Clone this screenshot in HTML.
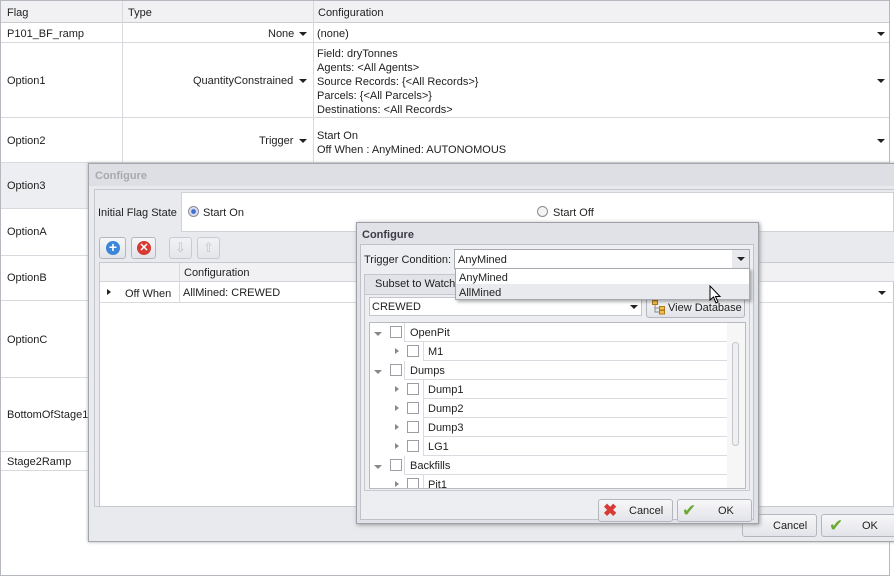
<!DOCTYPE html>
<html><head><style>
*{box-sizing:border-box;margin:0;padding:0}
body{width:894px;height:579px;background:#fff;font-family:"Liberation Sans",Arial,sans-serif;font-size:11px;color:#1e1e1e;position:relative;overflow:hidden}
.a{position:absolute}
.hl{position:absolute;background:#d8d9de}
.t{position:absolute;white-space:nowrap;margin-top:1px}
.arr{position:absolute;width:0;height:0;border-left:4px solid transparent;border-right:4px solid transparent;border-top:4px solid #222}
.btn{position:absolute;border:1px solid #b4b6be;border-radius:3px;background:linear-gradient(#f7f7f9,#e3e4e9)}
.cb{position:absolute;width:12px;height:12px;border:1px solid #9c9ea6;background:#fff}
.tri{position:absolute;width:0;height:0;border-top:3px solid transparent;border-bottom:3px solid transparent;border-left:4px solid #888}
.trd{position:absolute;width:0;height:0;border-left:4px solid transparent;border-right:4px solid transparent;border-top:4px solid #888}
.row{position:absolute;height:19px;border-bottom:1px solid #dadbe0;border-left:1px solid #dadbe0}
</style></head><body>
<div class="a" style="left:0;top:0;width:890px;height:576px;border:1px solid #b6b8c0"></div>
<div class="a" style="top:1px;left:1px;width:888px;height:22px;background:#f1f1f4;border-bottom:1px solid #ccc"></div>
<div class="a" style="left:1px;top:162px;width:121px;height:46px;background:#eceef1"></div>
<div class="hl" style="left:122px;top:1px;width:1px;height:161px"></div>
<div class="hl" style="left:313px;top:1px;width:1px;height:161px"></div>
<div class="hl" style="left:1px;top:42px;width:888px;height:1px"></div>
<div class="hl" style="left:1px;top:117px;width:888px;height:1px"></div>
<div class="hl" style="left:1px;top:162px;width:888px;height:1px"></div>
<div class="hl" style="left:1px;top:208px;width:88px;height:1px"></div>
<div class="hl" style="left:1px;top:255px;width:88px;height:1px"></div>
<div class="hl" style="left:1px;top:300px;width:88px;height:1px"></div>
<div class="hl" style="left:1px;top:377px;width:88px;height:1px"></div>
<div class="hl" style="left:1px;top:451px;width:88px;height:1px"></div>
<div class="hl" style="left:1px;top:470px;width:88px;height:1px"></div>
<div class="t" style="left:7px;top:6px">Flag</div>
<div class="t" style="left:128px;top:6px">Type</div>
<div class="t" style="left:318px;top:6px">Configuration</div>
<div class="t" style="left:7px;top:27px">P101_BF_ramp</div>
<div class="t" style="left:268px;top:27px">None</div><div class="arr" style="left:299px;top:32px"></div>
<div class="t" style="left:317px;top:27px">(none)</div><div class="arr" style="left:877px;top:32px"></div>
<div class="t" style="left:7px;top:74px">Option1</div>
<div class="t" style="left:193px;top:74px">QuantityConstrained</div><div class="arr" style="left:299px;top:79px"></div>
<div class="t" style="left:317px;top:46px;line-height:14px">Field: dryTonnes<br>Agents: &lt;All Agents&gt;<br>Source Records: {&lt;All Records&gt;}<br>Parcels: {&lt;All Parcels&gt;}<br>Destinations: &lt;All Records&gt;</div>
<div class="arr" style="left:877px;top:79px"></div>
<div class="t" style="left:7px;top:134px">Option2</div>
<div class="t" style="left:259px;top:134px">Trigger</div><div class="arr" style="left:299px;top:139px"></div>
<div class="t" style="left:317px;top:128px;line-height:14px">Start On<br>Off When : AnyMined: AUTONOMOUS</div>
<div class="arr" style="left:877px;top:139px"></div>
<div class="t" style="left:7px;top:179px">Option3</div>
<div class="t" style="left:7px;top:225px">OptionA</div>
<div class="t" style="left:7px;top:271px">OptionB</div>
<div class="t" style="left:7px;top:333px">OptionC</div>
<div class="t" style="left:7px;top:408px">BottomOfStage1</div>
<div class="t" style="left:7px;top:455px">Stage2Ramp</div>

<div class="a" style="left:88px;top:163px;width:810px;height:379px;background:#e9eaee;border:1px solid #a4a6ae;box-shadow:0 0 3px #aaa"></div>
<div class="a" style="left:89px;top:164px;width:808px;height:22px;background:#dedfe4"></div>
<div class="t" style="left:95px;top:169px;font-weight:bold;color:#a8a9ae">Configure</div>
<div class="a" style="left:94px;top:189px;width:804px;height:318px;border:1px solid #c8c9ce;background:#e9eaee"></div>
<div class="t" style="left:98px;top:206px">Initial Flag State</div>
<div class="a" style="left:181px;top:192px;width:713px;height:40px;background:#fff;border:1px solid #d0d1d6"></div>
<div class="a" style="left:188px;top:206px;width:11px;height:11px;border-radius:50%;border:1px solid #8a8c94;background:radial-gradient(#3d6fd6 30%,#dde 45%)"></div>
<div class="t" style="left:203px;top:206px">Start On</div>
<div class="a" style="left:537px;top:206px;width:11px;height:11px;border-radius:50%;border:1px solid #8a8c94;background:#f4f4f4"></div>
<div class="t" style="left:553px;top:206px">Start Off</div>
<div class="btn" style="left:99px;top:237px;width:27px;height:22px"><div class="a" style="left:6px;top:3px;width:14px;height:14px;border-radius:50%;background:#3b86d8;color:#fff;font-weight:bold;font-size:14px;line-height:13px;text-align:center">+</div></div>
<div class="btn" style="left:131px;top:237px;width:25px;height:22px"><div class="a" style="left:5px;top:3px;width:14px;height:14px;border-radius:50%;background:#d63a32;color:#fff;font-weight:bold;font-size:11px;line-height:14px;text-align:center">✕</div></div>
<div class="btn" style="left:169px;top:237px;width:23px;height:22px;opacity:.6;color:#aaa;text-align:center;line-height:20px;font-size:13px">⇩</div>
<div class="btn" style="left:197px;top:237px;width:23px;height:22px;opacity:.6;color:#aaa;text-align:center;line-height:20px;font-size:13px">⇧</div>
<div class="a" style="left:99px;top:262px;width:795px;height:245px;background:#fff;border:1px solid #c8c9ce"></div>
<div class="a" style="left:100px;top:263px;width:794px;height:19px;background:#f1f1f4;border-bottom:1px solid #d4d5da"></div>
<div class="hl" style="left:179px;top:263px;width:1px;height:39px"></div>
<div class="hl" style="left:100px;top:302px;width:794px;height:1px"></div>
<div class="t" style="left:184px;top:266px">Configuration</div>
<div class="a" style="left:107px;top:289px;border-top:3px solid transparent;border-bottom:3px solid transparent;border-left:4px solid #222"></div>
<div class="t" style="left:125px;top:287px">Off When</div>
<div class="t" style="left:183px;top:286px">AllMined: CREWED</div>
<div class="arr" style="left:878px;top:291px"></div>
<div class="btn" style="left:742px;top:514px;width:75px;height:23px"><span class="t" style="left:30px;top:4px">Cancel</span></div>
<div class="btn" style="left:821px;top:514px;width:75px;height:23px"><span class="t" style="left:7px;top:0;color:#6aa832;font-size:17px">✔</span><span class="t" style="left:40px;top:4px">OK</span></div>

<div class="a" style="left:356px;top:222px;width:403px;height:302px;background:#e1e2e7;border:1px solid #9fa1a9;box-shadow:1px 1px 4px #999"></div>
<div class="t" style="left:362px;top:228px;font-weight:bold;color:#3c3c44">Configure</div>
<div class="a" style="left:360px;top:244px;width:394px;height:276px;background:#eceef1;border:1px solid #c0c2c8"></div>
<div class="t" style="left:364px;top:253px">Trigger Condition:</div>
<div class="a" style="left:454px;top:249px;width:296px;height:20px;background:#fff;border:1px solid #a8aab2"></div>
<div class="t" style="left:458px;top:253px">AnyMined</div>
<div class="a" style="left:732px;top:250px;width:17px;height:18px;background:#e8e9ec"></div>
<div class="arr" style="left:737px;top:257px"></div>
<div class="a" style="left:364px;top:274px;width:110px;height:21px;background:#e2e3e8;border:1px solid #c4c6cc;border-bottom:none"></div>
<div class="t" style="left:375px;top:277px">Subset to Watch</div>
<div class="a" style="left:364px;top:294px;width:386px;height:197px;border:1px solid #c8c9ce;background:#eceef1"></div>
<div class="a" style="left:369px;top:297px;width:273px;height:19px;background:#fff;border:1px solid #c4c6cc"></div>
<div class="t" style="left:372px;top:300px">CREWED</div>
<div class="arr" style="left:630px;top:305px"></div>
<div class="btn" style="left:646px;top:296px;width:99px;height:22px">
 <svg class="a" style="left:5px;top:3px" width="14" height="15"><path d="M3 4 V12 H8 M3 8 H8" stroke="#888" fill="none"/><rect x="0.5" y="0.5" width="5" height="4" fill="#f2c04e" stroke="#b07a1c"/><rect x="7.5" y="6.5" width="5" height="3.5" fill="#f2c04e" stroke="#b07a1c"/><rect x="7.5" y="10.5" width="5" height="3.5" fill="#f2c04e" stroke="#b07a1c"/></svg>
 <span class="t" style="left:21px;top:4px">View Database</span></div>
<div class="a" style="left:369px;top:322px;width:377px;height:167px;background:#fff;border:1px solid #b8bac0;overflow:hidden">
 <div class="a" style="left:357px;top:0;width:18px;height:167px;background:#f6f6f7"></div>
 <div class="a" style="left:362px;top:19px;width:7px;height:104px;border:1px solid #c4c6cc;border-radius:4px;background:#f0f0f2"></div>
</div>
<div class="a" style="left:370px;top:323px;width:357px;height:165px;overflow:hidden">
 <div class="trd" style="left:4px;top:9px"></div><div class="cb" style="left:20px;top:3px"></div><div class="row" style="left:34px;top:0;width:323px"></div><div class="t" style="left:40px;top:3px">OpenPit</div>
 <div class="tri" style="left:25px;top:25px"></div><div class="cb" style="left:37px;top:22px"></div><div class="row" style="left:53px;top:19px;width:304px"></div><div class="t" style="left:58px;top:22px">M1</div>
 <div class="trd" style="left:4px;top:47px"></div><div class="cb" style="left:20px;top:41px"></div><div class="row" style="left:34px;top:38px;width:323px"></div><div class="t" style="left:40px;top:41px">Dumps</div>
 <div class="tri" style="left:25px;top:63px"></div><div class="cb" style="left:37px;top:60px"></div><div class="row" style="left:53px;top:57px;width:304px"></div><div class="t" style="left:58px;top:60px">Dump1</div>
 <div class="tri" style="left:25px;top:82px"></div><div class="cb" style="left:37px;top:79px"></div><div class="row" style="left:53px;top:76px;width:304px"></div><div class="t" style="left:58px;top:79px">Dump2</div>
 <div class="tri" style="left:25px;top:101px"></div><div class="cb" style="left:37px;top:98px"></div><div class="row" style="left:53px;top:95px;width:304px"></div><div class="t" style="left:58px;top:98px">Dump3</div>
 <div class="tri" style="left:25px;top:120px"></div><div class="cb" style="left:37px;top:117px"></div><div class="row" style="left:53px;top:114px;width:304px"></div><div class="t" style="left:58px;top:117px">LG1</div>
 <div class="trd" style="left:4px;top:142px"></div><div class="cb" style="left:20px;top:136px"></div><div class="row" style="left:34px;top:133px;width:323px"></div><div class="t" style="left:40px;top:136px">Backfills</div>
 <div class="tri" style="left:25px;top:158px"></div><div class="cb" style="left:37px;top:155px"></div><div class="row" style="left:53px;top:152px;width:304px"></div><div class="t" style="left:58px;top:155px">Pit1</div>
</div>
<div class="a" style="left:455px;top:268px;width:295px;height:32px;background:#fff;border:1px solid #a8aab2;box-shadow:2px 2px 3px rgba(0,0,0,.3)"></div>
<div class="a" style="left:456px;top:284px;width:293px;height:15px;background:#e9eaee"></div>
<div class="t" style="left:459px;top:271px">AnyMined</div>
<div class="t" style="left:459px;top:286px">AllMined</div>
<svg class="a" style="left:709px;top:285px" width="14" height="20"><path d="M1 1 L1 15 L4.5 12 L7 18 L9 17 L6.5 11.5 L11 11.5 Z" fill="#fff" stroke="#000"/></svg>
<div class="btn" style="left:598px;top:499px;width:75px;height:23px"><span class="t" style="left:4px;top:0;color:#d83a34;font-size:17px;font-weight:bold">✖</span><span class="t" style="left:30px;top:4px">Cancel</span></div>
<div class="btn" style="left:677px;top:499px;width:75px;height:23px"><span class="t" style="left:4px;top:0;color:#6aa832;font-size:17px">✔</span><span class="t" style="left:40px;top:4px">OK</span></div>
</body></html>
